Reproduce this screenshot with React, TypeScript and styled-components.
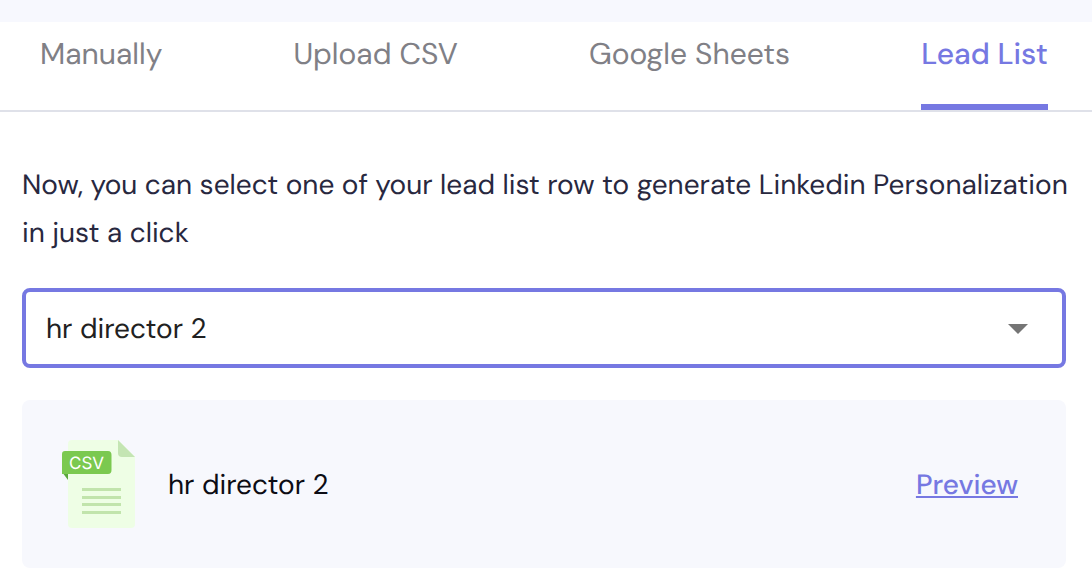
import React, { useState } from "react";
import styled, { createGlobalStyle } from "styled-components";

const GlobalStyle = createGlobalStyle`
  * { box-sizing: border-box; }
  body {
    margin: 0;
    background: #ffffff;
    color: #28283f;
    font-family: "DM Sans", "Inter", "Liberation Sans", sans-serif;
    text-rendering: geometricPrecision;
  }
`;

const TopBand = styled.div`
  height: 22px;
  background: #f7f8fe;
`;

const Tabs = styled.div`
  display: flex;
  justify-content: space-between;
  padding: 0 44px 0 40px;
  border-bottom: 2px solid #dfe1e9;
`;

const Tab = styled.button<{ $active: boolean }>`
  height: 88px;
  padding: 0 0 18px;
  border: 0;
  border-bottom: 6px solid ${(p) => (p.$active ? "#7678e2" : "transparent")};
  background: none;
  color: ${(p) => (p.$active ? "#7678e2" : "#808086")};
  font-family: inherit;
  font-size: 30px;
  font-weight: ${(p) => (p.$active ? 500 : 400)};
  text-rendering: inherit;
  white-space: nowrap;
  cursor: pointer;
`;

const Panel = styled.main`
  padding: 49px 26px 18px 22px;
`;

const Intro = styled.p`
  margin: 0 -6px 31px 0;
  font-size: 28px;
  line-height: 48px;
`;

const SelectField = styled.div`
  position: relative;
  margin-bottom: 32px;
`;

const Select = styled.select`
  display: block;
  width: 100%;
  height: 80px;
  padding: 0 64px 0 20px;
  border: 4px solid #7678e2;
  border-radius: 8px;
  outline: 0;
  appearance: none;
  background: #ffffff;
  color: #212121;
  font-family: inherit;
  font-size: 28px;
  text-rendering: inherit;
`;

const Caret = styled.svg`
  position: absolute;
  top: 36px;
  right: 38px;
  pointer-events: none;
`;

const FileCard = styled.section`
  display: flex;
  align-items: center;
  min-height: 168px;
  padding: 38px 48px 38px 40px;
  border-radius: 8px;
  background: #f7f8fd;
`;

const FileName = styled.span`
  flex: 1;
  margin-left: 32px;
  color: #0c0c14;
  font-size: 28px;
`;

const PreviewLink = styled.a`
  color: #7678e2;
  font-size: 28px;
  font-weight: 500;
  text-decoration: underline;
  text-decoration-thickness: 2px;
  text-underline-offset: 2px;
  text-decoration-skip-ink: none;
`;

function CsvIcon() {
  return (
    <svg width="74" height="88" viewBox="0 0 74 88" aria-hidden="true">
      <path d="M10 0H56L73 17V84Q73 88 69 88H10Q6 88 6 84V4Q6 0 10 0Z" fill="#eefee5" />
      <path d="M56 0L73 17H60Q56 17 56 13Z" fill="#c4e5b3" />
      <path d="M0 32H6V40Z" fill="#5ba83c" />
      <path d="M3 11H46Q49.500 11 49.500 15V30Q49.500 34 46 34H0V14Q0 11 3 11Z" fill="#7bc950" />
      <path d="M20 48H59V51H20ZM20 56H59V59H20ZM20 63H59V66H20ZM20 71H59V74H20Z" fill="#c1e4ac" />
      <text x="7" y="29" fill="#ffffff" fontSize="17" fontFamily="Inter, sans-serif">
        CSV
      </text>
    </svg>
  );
}

const TAB_NAMES = ["Manually", "Upload CSV", "Google Sheets", "Lead List"];

export default function App() {
  const [active, setActive] = useState("Lead List");
  return (
    <>
      <GlobalStyle />
      <TopBand />
      <Tabs role="tablist">
        {TAB_NAMES.map((name) => (
          <Tab
            key={name}
            type="button"
            role="tab"
            aria-selected={name === active}
            $active={name === active}
            onClick={() => setActive(name)}
          >
            {name}
          </Tab>
        ))}
      </Tabs>
      <Panel>
        <Intro id="intro">
          Now, you can select one of your lead list row to generate Linkedin Personalization in just
          a click
        </Intro>
        <SelectField>
          <Select aria-labelledby="intro" defaultValue="hr director 2">
            <option>hr director 2</option>
          </Select>
          <Caret width="20" height="10" viewBox="0 0 20 10" aria-hidden="true">
            <path d="M0 0H20L10 10Z" fill="#757575" />
          </Caret>
        </SelectField>
        <FileCard>
          <CsvIcon />
          <FileName>hr director 2</FileName>
          <PreviewLink href="#preview">Preview</PreviewLink>
        </FileCard>
      </Panel>
    </>
  );
}
